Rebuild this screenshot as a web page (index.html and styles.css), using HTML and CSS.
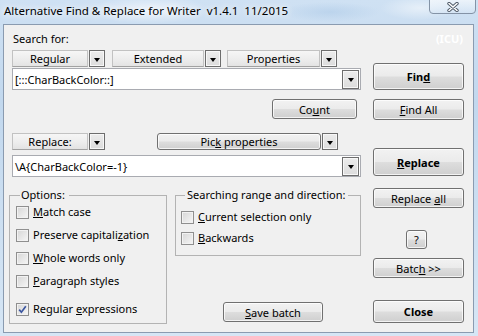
FILE: index.html
```html
<!DOCTYPE html>
<html lang="en">
<head>
    <meta charset="UTF-8">
    <title>Alternative Find &amp; Replace for Writer</title>
    <link rel="stylesheet" href="styles.css">
</head>
<body>
<div class="window">
    <div class="titlebar">
        <span class="title">Alternative Find &amp; Replace for Writer  v1.4.1  11/2015</span>
        <div class="close">
            <svg width="12" height="10" viewBox="0 0 12 10">
                <path d="M2 1.5 L10 8.5 M10 1.5 L2 8.5" stroke="#4d5866" stroke-width="3.4" stroke-linecap="round"/>
                <path d="M2 1.5 L10 8.5 M10 1.5 L2 8.5" stroke="#fff" stroke-width="1.6" stroke-linecap="round"/>
            </svg>
        </div>
    </div>

    <div class="client">
        <div class="main">
            <div class="label">Search for:</div>
            <div class="tool-row">
                <div class="flat w-regular">Regular</div>
                <div class="drop"><i></i></div>
                <div class="flat w-ext">Extended</div>
                <div class="drop"><i></i></div>
                <div class="flat w-prop">Properties</div>
                <div class="drop"><i></i></div>
            </div>
            <div class="combo">
                <span class="combo-text">[:::CharBackColor::]</span>
                <div class="drop combo-drop"><i></i></div>
            </div>
            <div class="count-row">
                <button class="btn count">Co<u>u</u>nt</button>
            </div>
            <div class="tool-row row-replace">
                <div class="flat w-regular">Replace:</div>
                <div class="drop"><i></i></div>
                <button class="btn pick">Pic<u>k</u> properties</button>
                <div class="drop"><i></i></div>
            </div>
            <div class="combo combo-replace">
                <span class="combo-text">\A{CharBackColor=-1}</span>
                <div class="drop combo-drop"><i></i></div>
            </div>

            <div class="lower">
                <fieldset class="group options">
                    <legend>Options:</legend>
                    <label class="check"><span class="box"></span><span><u>M</u>atch case</span></label>
                    <label class="check"><span class="box"></span><span>Preserve capitali<u>z</u>ation</span></label>
                    <label class="check"><span class="box"></span><span><u>W</u>hole words only</span></label>
                    <label class="check"><span class="box"></span><span><u>P</u>aragraph styles</span></label>
                    <label class="check last"><span class="box checked">
                        <svg width="11" height="11" viewBox="0 0 11 11"><path d="M2.2 5.6 L4.4 8.2 L8.8 2.2" fill="none" stroke="#3b56a0" stroke-width="1.7"/></svg>
                    </span><span>Regular <u>e</u>xpressions</span></label>
                </fieldset>
                <div class="lower-right">
                    <fieldset class="group searching">
                        <legend>Searching range and direction:</legend>
                        <label class="check"><span class="box"></span><span><u>C</u>urrent selection only</span></label>
                        <label class="check"><span class="box"></span><span><u>B</u>ackwards</span></label>
                    </fieldset>
                    <button class="btn save"><u>S</u>ave batch</button>
                </div>
            </div>
        </div>

        <div class="side">
            <div class="icu">(ICU)</div>
            <button class="btn bold find">Fin<u>d</u></button>
            <button class="btn find-all"><u>F</u>ind All</button>
            <button class="btn bold replace"><u>R</u>eplace</button>
            <button class="btn replace-all">Replace <u>a</u>ll</button>
            <button class="btn help">?</button>
            <button class="btn batch">Batc<u>h</u> &gt;&gt;</button>
            <button class="btn bold close-btn">Close</button>
        </div>
    </div>
</div>
</body>
</html>
```

FILE: styles.css
```css
* {
    box-sizing: border-box;
}

body {
    margin: 0;
    width: 478px;
    height: 336px;
    overflow: hidden;
    font-family: "Noto Sans", "Open Sans", sans-serif;
    font-size: 11px;
    color: #000;
    background:
        radial-gradient(ellipse 60px 14px at 150px 10px, rgba(255,255,255,0.6), transparent),
        radial-gradient(ellipse 40px 12px at 420px 8px, rgba(255,255,255,0.5), transparent),
        radial-gradient(ellipse 50px 10px at 330px 12px, rgba(170,200,230,0.5), transparent),
        linear-gradient(#cfe1f3, #c2d8ee 30%, #d6e6f5);
}

.window {
    width: 478px;
    height: 336px;
    display: flex;
    flex-direction: column;
}

/* title bar */
.titlebar {
    height: 24px;
    flex-shrink: 0;
    display: flex;
    justify-content: space-between;
    align-items: flex-start;
}

.title {
    padding: 3px 0 0 4px;
    line-height: 16px;
    font-size: 11.5px;
    white-space: pre;
    text-shadow: 0 0 6px #fff, 0 0 10px #fff;
}

.close {
    width: 47px;
    height: 15px;
    margin: -1px 2px 0 0;
    border: 1px solid #8493a6;
    border-radius: 0 0 4px 4px;
    background: linear-gradient(rgba(255,255,255,0.6), rgba(215,230,245,0.55));
    display: flex;
    align-items: center;
    justify-content: center;
}

/* dialog body */
.client {
    height: 309px;
    margin: 0 4px 0 3px;
    padding-left: 5px;
    border: 1px solid #8a9bb0;
    background: #f0f0f0;
    display: flex;
}

.main {
    width: 352px;
    display: flex;
    flex-direction: column;
}

.side {
    width: 91px;
    margin-left: 12px;
    display: flex;
    flex-direction: column;
}

.label {
    margin: 6px 0 0 4px;
    line-height: 16px;
}

.tool-row {
    display: flex;
    height: 17px;
    margin: 3px 0 0 3px;
}

.row-replace {
    margin-top: 14px;
}

.flat {
    height: 17px;
    border: 1px solid #c2c2c2;
    border-bottom-color: #a2a2a2;
    background: linear-gradient(#f6f6f6, #ececec 60%, #e3e3e3);
    text-align: center;
    line-height: 15px;
}

.w-regular { width: 76px; }
.w-ext { width: 92px; margin-left: 7px; }
.w-prop { width: 93px; margin-left: 6px; }

.drop {
    width: 16px;
    height: 17px;
    margin-left: 1px;
    border: 1px solid #6d6d6d;
    background: linear-gradient(#ececec, #dcdcdc);
    box-shadow: inset 0 0 0 1px #f7f7f7;
    display: flex;
    align-items: center;
    justify-content: center;
}

.drop i {
    width: 0;
    height: 0;
    margin-top: 2px;
    border-left: 3.5px solid transparent;
    border-right: 3.5px solid transparent;
    border-top: 4px solid #000;
}

.combo {
    width: 349px;
    height: 22px;
    margin: 1px 0 0 3px;
    border: 1px solid #a9abb1;
    background: #fff;
    display: flex;
    align-items: center;
    justify-content: space-between;
}

.combo-replace {
    margin-top: 5px;
}

.combo-text {
    padding-left: 2px;
}

.combo-drop {
    width: 17px;
    height: 19px;
    margin-right: 1px;
}

.count-row {
    display: flex;
    justify-content: flex-end;
    margin-top: 9px;
    padding-right: 4px;
}

/* buttons */
.btn {
    display: block;
    margin: 0;
    padding: 0;
    font: inherit;
    color: #000;
    text-align: center;
    white-space: nowrap;
    border: 1px solid #707070;
    border-radius: 3px;
    background: linear-gradient(#f2f2f2, #ebebeb 48%, #dddddd 52%, #cfcfcf);
    box-shadow: inset 0 0 0 1px rgba(255,255,255,0.75);
    flex-shrink: 0;
}

.bold {
    font-weight: bold;
}

.count { width: 85px; height: 20px; }
.pick { width: 164px; height: 17px; margin-left: 52px; }

.icu {
    margin-top: 6px;
    line-height: 16px;
    text-align: right;
    padding-right: 1px;
    font-weight: bold;
    color: #fff;
}

.find { height: 27px; margin-top: 16px; }
.find-all { height: 21px; margin-top: 9px; }
.replace { height: 28px; margin-top: 28px; }
.replace-all { height: 20px; margin-top: 12px; }
.help { width: 21px; height: 19px; margin: 22px 0 0 33px; }
.batch { height: 20px; margin-top: 9px; }
.close-btn { height: 23px; margin-top: 22px; }

/* groups */
.lower {
    display: flex;
    margin-top: 10px;
}

.group {
    margin: 0;
    border: 1px solid #b3b3b3;
    display: flex;
    flex-direction: column;
}

.group legend {
    line-height: 16px;
    padding: 0;
}

.options {
    width: 158px;
    height: 137px;
    padding: 1px 6px 0 6px;
}

.options legend {
    margin-left: 4px;
    padding: 0 4px 0 1px;
}

.lower-right {
    width: 186px;
    margin-left: 8px;
    display: flex;
    flex-direction: column;
}

.searching {
    height: 69px;
    padding: 6px 5px 0 5px;
}

.searching legend {
    margin-left: 4px;
    padding: 0 3px 0 2px;
}

.save {
    width: 100px;
    height: 20px;
    margin: 46px 0 0 48px;
}

.check {
    display: flex;
    align-items: center;
    height: 16px;
    line-height: 16px;
}

.options .check + .check {
    margin-top: 7px;
}

.options .check.last {
    margin-top: 12px;
}

.searching .check + .check {
    margin-top: 5px;
}

.box {
    width: 13px;
    height: 13px;
    margin-right: 4px;
    border: 1px solid #8f8f8f;
    background: linear-gradient(135deg, #d6d6d6, #f6f6f6);
    box-shadow: inset 0 0 0 1px #f2f2f2;
    display: flex;
    align-items: center;
    justify-content: center;
}
```
